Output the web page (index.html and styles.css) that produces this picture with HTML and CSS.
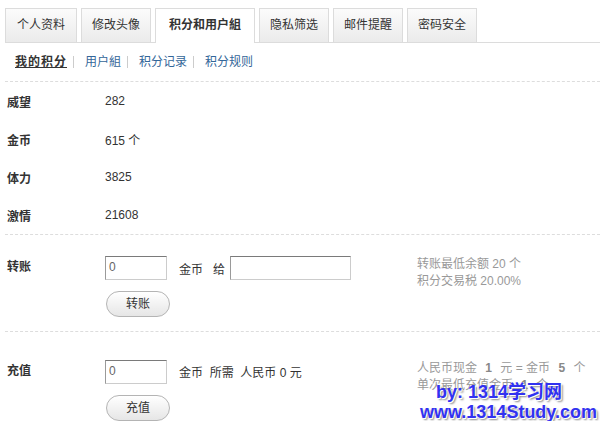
FILE: index.html
```html
<!DOCTYPE html>
<html lang="zh-CN">
<head>
<meta charset="utf-8">
<title>积分</title>
<link rel="stylesheet" href="styles.css">
</head>
<body>
<ul class="tabs">
  <li class="tab first-tab">个人资料</li>
  <li class="tab">修改头像</li>
  <li class="tab active">积分和用户組</li>
  <li class="tab">隐私筛选</li>
  <li class="tab">邮件提醒</li>
  <li class="tab">密码安全</li>
</ul>
<div class="subnav">
  <a class="cur">我的积分</a><span class="sep"></span><a>用户組</a><span class="sep"></span><a>积分记录</a><span class="sep"></span><a>积分规则</a>
</div>
<div class="stats">
  <div class="stat"><span class="label">威望</span><span class="val">282</span></div>
  <div class="stat"><span class="label">金币</span><span class="val">615 个</span></div>
  <div class="stat"><span class="label">体力</span><span class="val">3825</span></div>
  <div class="stat"><span class="label">激情</span><span class="val">21608</span></div>
</div>
<div class="section first">
  <div class="slabel">转账</div>
  <div class="form">
    <div class="line">
      <span class="input small">0</span>
      <span class="txt">金币&nbsp;&nbsp;&nbsp;给</span>
      <span class="input wide"></span>
    </div>
    <span class="btn">转账</span>
  </div>
  <div class="note">转账最低余额 20 个<br>积分交易税 20.00%</div>
</div>
<div class="section second">
  <div class="slabel">充值</div>
  <div class="form">
    <div class="line">
      <span class="input small">0</span>
      <span class="txt">金币&nbsp;&nbsp;所需&nbsp;&nbsp;人民币 0 元</span>
    </div>
    <span class="btn">充值</span>
  </div>
  <div class="note">人民币现金 <strong>1</strong> 元 = 金币 <strong>5</strong> 个<br>单次最低充值金币 <strong>1</strong> 个</div>
</div>
<div class="watermark">
  <div class="wm1">by: 1314学习网</div>
  <div class="wm2">www.1314Study.com</div>
</div>
</body>
</html>
```
FILE: styles.css
```css
* { box-sizing: border-box; }
html, body { margin: 0; padding: 0; background: #fff; }
body {
  font-family: "Liberation Sans", "Noto Sans CJK SC", sans-serif;
  font-size: 12px;
  color: #333;
  width: 600px;
  height: 421px;
  overflow: hidden;
  position: relative;
}
.tabs {
  list-style: none;
  margin: 8px 0 0 5px;
  padding: 0;
  display: flex;
  gap: 4px;
  height: 35px;
  border-bottom: 1px solid #dcdcdc;
}
.tab {
  height: 34px;
  line-height: 33px;
  padding: 0 10px;
  border: 1px solid #dcdcdc;
  border-bottom: none;
  background: linear-gradient(#fbfbfb, #ebebeb);
  color: #333;
}
.tab.first-tab { padding: 0 11px; }
.tab.active {
  height: 35px;
  background: #fff;
  font-weight: bold;
  padding: 0 13px;
}
.subnav {
  margin-left: 5px;
  padding-left: 10px;
  height: 39px;
  display: flex;
  align-items: center;
  border-bottom: 1px dashed #dddddd;
}
.subnav a { color: #336699; line-height: 16px; }
.subnav a.cur { color: #333; font-weight: bold; text-decoration: underline; letter-spacing: 1px; }
.sep {
  width: 1px;
  height: 12px;
  background: #cccccc;
  margin: 0 11px 0 6px;
}
.stats {
  margin-left: 5px;
  border-bottom: 1px dashed #dddddd;
}
.stat {
  height: 38px;
  display: flex;
  align-items: center;
}
.label {
  width: 100px;
  padding-left: 2px;
  font-weight: bold;
}
.section {
  margin-left: 5px;
  display: flex;
  align-items: flex-start;
}
.section.first { padding: 21px 0 14px; border-bottom: 1px dashed #dddddd; }
.section.second { padding-top: 28px; }
.slabel {
  width: 100px;
  padding: 2px 0 0 2px;
  font-weight: bold;
  line-height: 18px;
}
.form {
  width: 312px;
  display: flex;
  flex-direction: column;
  align-items: flex-start;
  gap: 11px;
}
.line { display: flex; align-items: flex-end; }
.input {
  height: 24px;
  border: 1px solid #cccccc;
  border-top-color: #7a7a7a;
  border-left-color: #9a9a9a;
  background: #fff;
  color: #666;
  line-height: 21px;
  padding-left: 3px;
}
.input.small { width: 62px; }
.input.wide { width: 121px; margin-left: 5px; }
.txt { margin-left: 12px; line-height: 20px; }
.section.second .txt { line-height: 21px; }
.btn {
  margin-left: 1px;
  width: 64px;
  height: 26px;
  border: 1px solid #b4b4b4;
  border-radius: 13px;
  background: linear-gradient(#ffffff, #e6e6e6);
  text-align: center;
  line-height: 24px;
  color: #333;
}
.note {
  color: #999;
  line-height: 17px;
}
.note strong { color: #888; padding: 0 5px; }
.watermark {
  position: absolute;
  left: 0;
  top: 382px;
  font-family: "Liberation Sans", "Noto Sans CJK SC", sans-serif;
  font-size: 18px;
  font-weight: bold;
  line-height: 20px;
  color: #3232f0;
  text-shadow: 1px 1px 0 #ffffff, 2px 2px 2px #8a8a8a;
}
.wm1 { margin-left: 436px; white-space: nowrap; }
.wm2 { margin-left: 420px; white-space: nowrap; }
```
